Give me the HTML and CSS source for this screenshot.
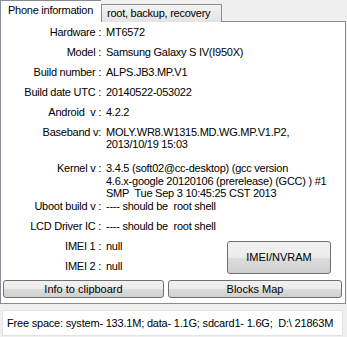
FILE: index.html
```html
<!DOCTYPE html>
<html lang="en">
  <head>
    <meta charset="utf-8">
    <title>Phone information</title>
    <link rel="stylesheet" href="styles.css">
  </head>
  <body>
    <div class="tabs">
      <div class="tab active">Phone information</div>
      <div class="tab">root, backup, recovery</div>
    </div>
    <div class="panel">
      <div class="row"><span class="lbl">Hardware :</span><span class="val">MT6572</span></div>
      <div class="row"><span class="lbl">Model :</span><span class="val">Samsung Galaxy S IV(I950X)</span></div>
      <div class="row"><span class="lbl">Build number :</span><span class="val">ALPS.JB3.MP.V1</span></div>
      <div class="row"><span class="lbl">Build date UTC :</span><span class="val">20140522-053022</span></div>
      <div class="row"><span class="lbl">Android&nbsp; v :</span><span class="val">4.2.2</span></div>
      <div class="row baseband"><span class="lbl">Baseband v:</span><span class="val">MOLY.WR8.W1315.MD.WG.MP.V1.P2,<br>2013/10/19 15:03</span></div>
      <div class="row kernel"><span class="lbl">Kernel v :</span><span class="val">3.4.5 (soft02@cc-desktop) (gcc version<br>4.6.x-google 20120106 (prerelease) (GCC) ) #1<br>SMP&nbsp; Tue Sep 3 10:45:25 CST 2013</span></div>
      <div class="row"><span class="lbl">Uboot build v :</span><span class="val">---- should be&nbsp; root shell</span></div>
      <div class="row"><span class="lbl">LCD Driver IC :</span><span class="val">---- should be&nbsp; root shell</span></div>
      <div class="imei">
        <div class="imei-rows">
          <div class="row"><span class="lbl">IMEI 1 :</span><span class="val">null</span></div>
          <div class="row"><span class="lbl">IMEI 2 :</span><span class="val">null</span></div>
        </div>
        <div class="btn big">IMEI/NVRAM</div>
      </div>
      <div class="actions">
        <div class="btn wide1">Info to clipboard</div>
        <div class="btn wide2">Blocks Map</div>
      </div>
    </div>
    <div class="status">Free space: system- 133.1M; data- 1.1G; sdcard1- 1.6G;&nbsp; D:\ 21863M</div>
  </body>
</html>
```
FILE: styles.css
```css
body{
  margin:0;
  background-color:#f0f0f0;
  font-family:"Liberation Sans", Arial, sans-serif;
  font-size:11px;
  letter-spacing:-0.25px;
  color:#000;
  width:347px;
  height:337px;
  overflow:hidden;
}
.tabs{
  display:flex;
  align-items:flex-end;
  height:21px;
}
.tab{
  box-sizing:border-box;
  height:18px;
  width:121px;
  padding:2px 0 0 5px;
  border:1px solid #898c95;
  border-bottom:none;
  background:linear-gradient(#f3f3f3,#e3e3e3);
  margin-bottom:-1px;
  position:relative;
}
.tab.active{
  height:22px;
  width:101px;
  padding:3px 0 0 7px;
  background:#fff;
  z-index:1;
  border-right:none;
}
.panel{
  box-sizing:border-box;
  width:346px;
  height:283px;
  background:#fff;
  border:1px solid #898c95;
  padding-top:4px;
}
.row{
  display:flex;
  height:20px;
  line-height:13px;
  white-space:nowrap;
}
.lbl{
  box-sizing:border-box;
  width:105px;
  flex:none;
  text-align:right;
  padding-right:5px;
}
.baseband{
  height:36px;
  line-height:12px;
}
.kernel{
  height:38px;
  line-height:12.5px;
}
.imei{
  display:flex;
  align-items:flex-start;
}
.imei-rows{
  width:226px;
}
.btn{
  box-sizing:border-box;
  border:1px solid #707070;
  border-radius:3px;
  background:linear-gradient(#f2f2f2 0%,#ebebeb 50%,#dddddd 51%,#cfcfcf 100%);
  text-align:center;
  letter-spacing:0;
}
.big{
  width:104px;
  height:33px;
  line-height:31px;
  margin-top:1px;
}
.actions{
  display:flex;
  gap:4px;
  padding-left:2px;
}
.actions .btn{
  height:18px;
  line-height:16px;
}
.wide1{ width:161px; }
.wide2{ width:174px; }
.status{
  box-sizing:border-box;
  margin:6px 0 0 2px;
  width:341px;
  height:26px;
  background:#fff;
  border:1px solid #e3e3e3;
  padding:6px 0 0 4px;
  letter-spacing:-0.2px;
  white-space:nowrap;
}
```
